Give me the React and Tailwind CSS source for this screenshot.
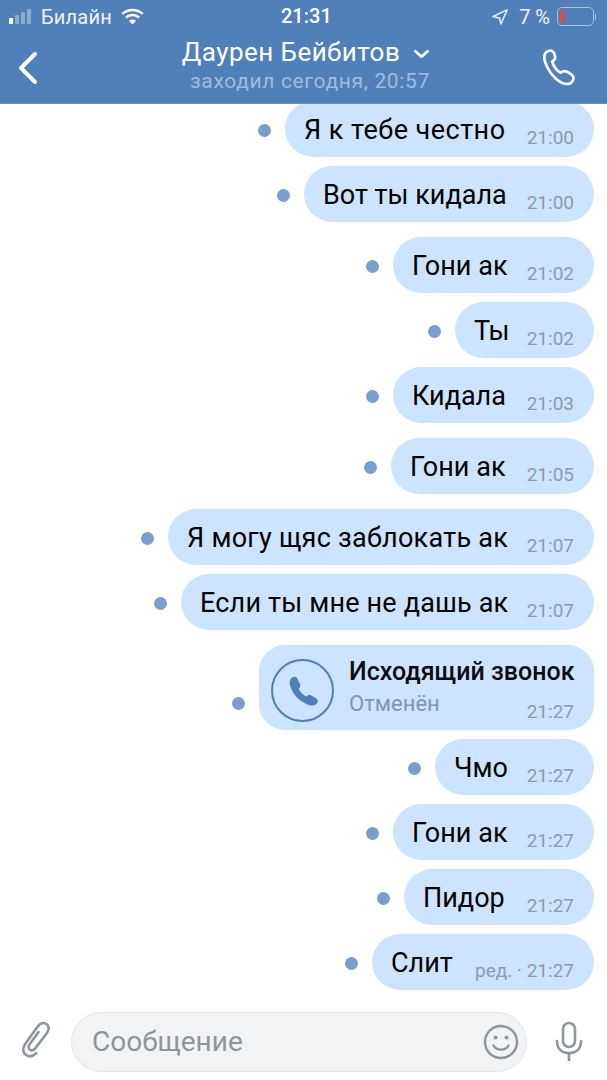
const msgs = [
  { t: "Я к тебе честно", h: "21:00", w: "w-[309px]", mb: "mb-[9px]", cls: "-mt-[3px]", tr: "tracking-[0.47px]" },
  { t: "Вот ты кидала", h: "21:00", w: "w-[290px]", mb: "mb-[15px]", tr: "" },
  { t: "Гони ак", h: "21:02", w: "w-[201px]", mb: "mb-[9px]", tr: "tracking-[0.1px]" },
  { t: "Ты", h: "21:02", w: "w-[139px]", mb: "mb-[9px]", tr: "" },
  { t: "Кидала", h: "21:03", w: "w-[201px]", mb: "mb-[15px]", tr: "" },
  { t: "Гони ак", h: "21:05", w: "w-[203px]", mb: "mb-[15px]", tr: "tracking-[0.1px]" },
  { t: "Я могу щяс заблокать ак", h: "21:07", w: "w-[426px]", mb: "mb-[9px]", tr: "tracking-[0.26px]" },
  { t: "Если ты мне не дашь ак", h: "21:07", w: "w-[413px]", mb: "mb-[15px]", tr: "tracking-[0.18px]" },
  { call: true },
  { t: "Чмо", h: "21:27", w: "w-[159px]", mb: "mb-[9px]", tr: "" },
  { t: "Гони ак", h: "21:27", w: "w-[201px]", mb: "mb-[9px]", tr: "tracking-[0.1px]" },
  { t: "Пидор", h: "21:27", w: "w-[190px]", mb: "mb-[9px]", tr: "" },
  { t: "Слит", h: "ред. · 21:27", w: "w-[222px]", mb: "mb-0", tr: "" },
];

function Dot({ cls = "" }) {
  return <span className={`w-[13px] h-[13px] rounded-full bg-[#7a9ecb] mr-[14px] shrink-0 ${cls}`} />;
}

function Bubble({ t, h, w, mb, tr, cls = "" }) {
  return (
    <div className={`flex items-center justify-end ${mb} ${cls}`}>
      <Dot cls="mt-[2px]" />
      <div className={`${w} h-[56px] rounded-[28px] bg-[#cce4ff] flex items-center justify-between pl-[19px] pr-[20px]`}>
        <span className={`text-[27px] leading-[30px] text-black mt-[2px] whitespace-nowrap ${tr}`}>{t}</span>
        <span className="text-[19px] leading-[20px] text-[#8a9bb0] mt-[18px] whitespace-nowrap">{h}</span>
      </div>
    </div>
  );
}

function CallBubble() {
  return (
    <div className="flex items-center justify-end mb-[9px]">
      <Dot cls="mt-[31px]" />
      <div className="w-[335px] h-[85px] rounded-[26px] bg-[#cce4ff] flex items-center pl-[12px] pr-[20px]">
        <div className="w-[63px] h-[63px] mt-[6px] rounded-full border-2 border-[#517fb5] flex items-center justify-center shrink-0">
          <svg className="shrink-0" width="32" height="32" viewBox="0 0 32 32" fill="#517fb5">
            <path d="M4 3.5 C5.5 1.5 9 1.2 10.2 3.2 L13 9 C13.8 11 13.2 12.4 11.6 13.6 C13.2 17 15.8 20 19.2 21.6 C20.6 20.2 22.6 19.6 24.4 20.6 L29.4 23.6 C31.4 25 31 27.6 29.4 29 C27.4 30.8 24.6 31 21.8 30 C12 26.6 5.4 19 3 10.6 C2.4 8 2.6 5.4 4 3.5 Z" />
          </svg>
        </div>
        <div className="flex-1 ml-[15px] min-w-0">
          <div className="text-[25px] leading-[28px] text-[#0a0a0f] font-medium whitespace-nowrap">Исходящий звонок</div>
          <div className="flex justify-between items-end mt-[4px]">
            <span className="text-[22px] leading-[28px] text-[#8096ae]">Отменён</span>
            <span className="text-[19px] leading-[20px] text-[#8a9bb0] relative top-[4px]">21:27</span>
          </div>
        </div>
      </div>
    </div>
  );
}

export default function App() {
  return (
    <div className="w-[607px] h-[1080px] bg-white flex flex-col overflow-hidden font-['Roboto','Inter',sans-serif]">
      <header className="h-[104px] bg-[#517fb9] shrink-0 relative z-10 border-b border-[#6f8fb2] flex flex-col text-white">
        <div className="h-[33px] pl-[9px] pr-[11px] flex items-center justify-between relative">
          <div className="flex items-center">
            <div className="flex items-end gap-[2px] h-[15px] mr-[10px]">
              <span className="w-[4px] h-[6px] rounded-[1px] bg-white" />
              <span className="w-[4px] h-[9px] rounded-[1px] bg-[#8daad0]" />
              <span className="w-[4px] h-[12px] rounded-[1px] bg-[#8daad0]" />
              <span className="w-[4px] h-[15px] rounded-[1px] bg-[#8daad0]" />
            </div>
            <span className="text-[20px] leading-[22px] tracking-[0.2px] text-[#eef3fa]">Билайн</span>
            <svg className="ml-[9px]" width="23" height="17" viewBox="0 0 20 15" fill="none" stroke="#fff" strokeWidth="2.2">
              <path d="M1 5.2 C6 0.6 14 0.6 19 5.2" />
              <path d="M4.2 8.4 C7.6 5.4 12.4 5.4 15.8 8.4" />
              <path d="M10 14.6 L6.9 11.2 C8.7 9.7 11.3 9.7 13.1 11.2 Z" fill="#fff" stroke="none" />
            </svg>
          </div>
          <span className="absolute left-[281px] top-[5px] text-[20px] leading-[22px] font-medium">21:31</span>
          <div className="flex items-center">
            <svg width="16" height="16" viewBox="0 0 17 17" fill="none" stroke="#e8eef7" strokeWidth="1.6" strokeLinejoin="round">
              <path d="M16 1 L1 8 L8 9.5 L9.5 16 Z" />
            </svg>
            <span className="ml-[11px] text-[20px] leading-[22px] text-[#eef3fa]">7 %</span>
            <div className="ml-[7px] w-[37px] h-[19px] rounded-[5px] border border-[#a9c0de] p-[2px] flex">
              <span className="w-[5px] h-full rounded-[1px] bg-[#c8525a]" />
            </div>
            <span className="w-[1px] h-[6px] bg-[#a9c0de] ml-[1px]" />
          </div>
        </div>
        <div className="flex-1 flex items-start justify-between pl-[18px] pr-[30px] relative">
          <svg className="mt-[18px]" width="20" height="34" viewBox="0 0 20 34" fill="none" stroke="#fff" strokeWidth="4" strokeLinecap="round" strokeLinejoin="round">
            <path d="M17 3 L3 17 L17 31" />
          </svg>
          <div className="flex flex-col items-center absolute left-0 right-0 top-[4px] pl-[5px]">
            <div className="flex items-center">
              <span className="text-[26px] leading-[30px] tracking-[0.45px] whitespace-nowrap">Даурен Бейбитов</span>
              <svg className="ml-[13px] mt-[3px]" width="17" height="10" viewBox="0 0 15 9" fill="none" stroke="#fff" strokeWidth="2.4" strokeLinecap="round" strokeLinejoin="round">
                <path d="M2 2 L7.5 7 L13 2" />
              </svg>
            </div>
            <span className="text-[21px] leading-[24px] text-[#9fbbdf] mt-[2px] tracking-[0.65px] whitespace-nowrap translate-x-[4px]">заходил сегодня, 20:57</span>
          </div>
          <svg className="mt-[16px]" width="36" height="37" viewBox="0 0 32 36" fill="none" stroke="#fff" strokeWidth="2.6" strokeLinejoin="round">
            <path d="M2.5 4.5 C4 2 7.5 0.9 9.5 2 C11 2.8 11.8 5 12.2 7.5 C12.5 9.5 11.5 11 9.5 12 C9.8 15.5 14.2 22 17.5 23 C19.5 21.5 21 21 23 21.8 C26 23 29.5 25 30 27.5 C30.6 30.5 28 33.5 25 34 C17 35 8 25 4.5 17.5 C2 12.5 1 7.5 2.5 4.5 Z" />
          </svg>
        </div>
      </header>

      <main className="flex-1 flex flex-col pr-[13px] overflow-hidden">
        {msgs.map((m, i) => (m.call ? <CallBubble key={i} /> : <Bubble key={i} {...m} />))}
      </main>

      <footer className="h-[90px] shrink-0 flex items-start pt-[22px] pl-[20px] pr-[22px] relative">
        <svg className="mt-[9px]" width="33" height="38" viewBox="0 0 32 38" fill="none" stroke="#8f959c" strokeWidth="2.6" strokeLinecap="round" strokeLinejoin="round">
          <path d="M18 11 L9 23.5 C7.4 25.8 8 27.8 9.6 28.9 C11.4 30 13.2 29.4 14.8 27.4 L26.4 12 C29.2 8 28.6 4.8 26 3 C23.2 1.2 20 2 17.2 5.6 L5 22.4 C1.6 27.2 2.2 31.6 5.6 34 C9 36.2 12.6 35.4 15.8 32.2" />
        </svg>
        <div className="ml-[18px] w-[456px] h-[60px] rounded-[30px] bg-[#f2f3f5] border border-[#e3e5e8] flex items-center justify-between pl-[20px] pr-[7px]">
          <span className="text-[28px] leading-[30px] text-[#8f959c]">Сообщение</span>
          <svg width="36" height="36" viewBox="0 0 36 36" fill="none" stroke="#8f959c" strokeWidth="2.4" strokeLinecap="round">
            <circle cx="18" cy="18" r="16" />
            <path d="M10.5 21.5 C13 27 23 27 25.5 21.5" />
            <circle cx="12.5" cy="13.5" r="2" fill="#8f959c" stroke="none" />
            <circle cx="23.5" cy="13.5" r="2" fill="#8f959c" stroke="none" />
          </svg>
        </div>
        <svg className="ml-[28px] mt-[9px]" width="28" height="42" viewBox="0 0 28 42" fill="none" stroke="#8f959c" strokeWidth="2.6" strokeLinecap="round">
          <rect x="8" y="2" width="12" height="24" rx="6" />
          <path d="M2 20 C2 28 7 32 14 32 C21 32 26 28 26 20" />
          <path d="M14 32 L14 40" strokeLinecap="butt" />
        </svg>
      </footer>
    </div>
  );
}
